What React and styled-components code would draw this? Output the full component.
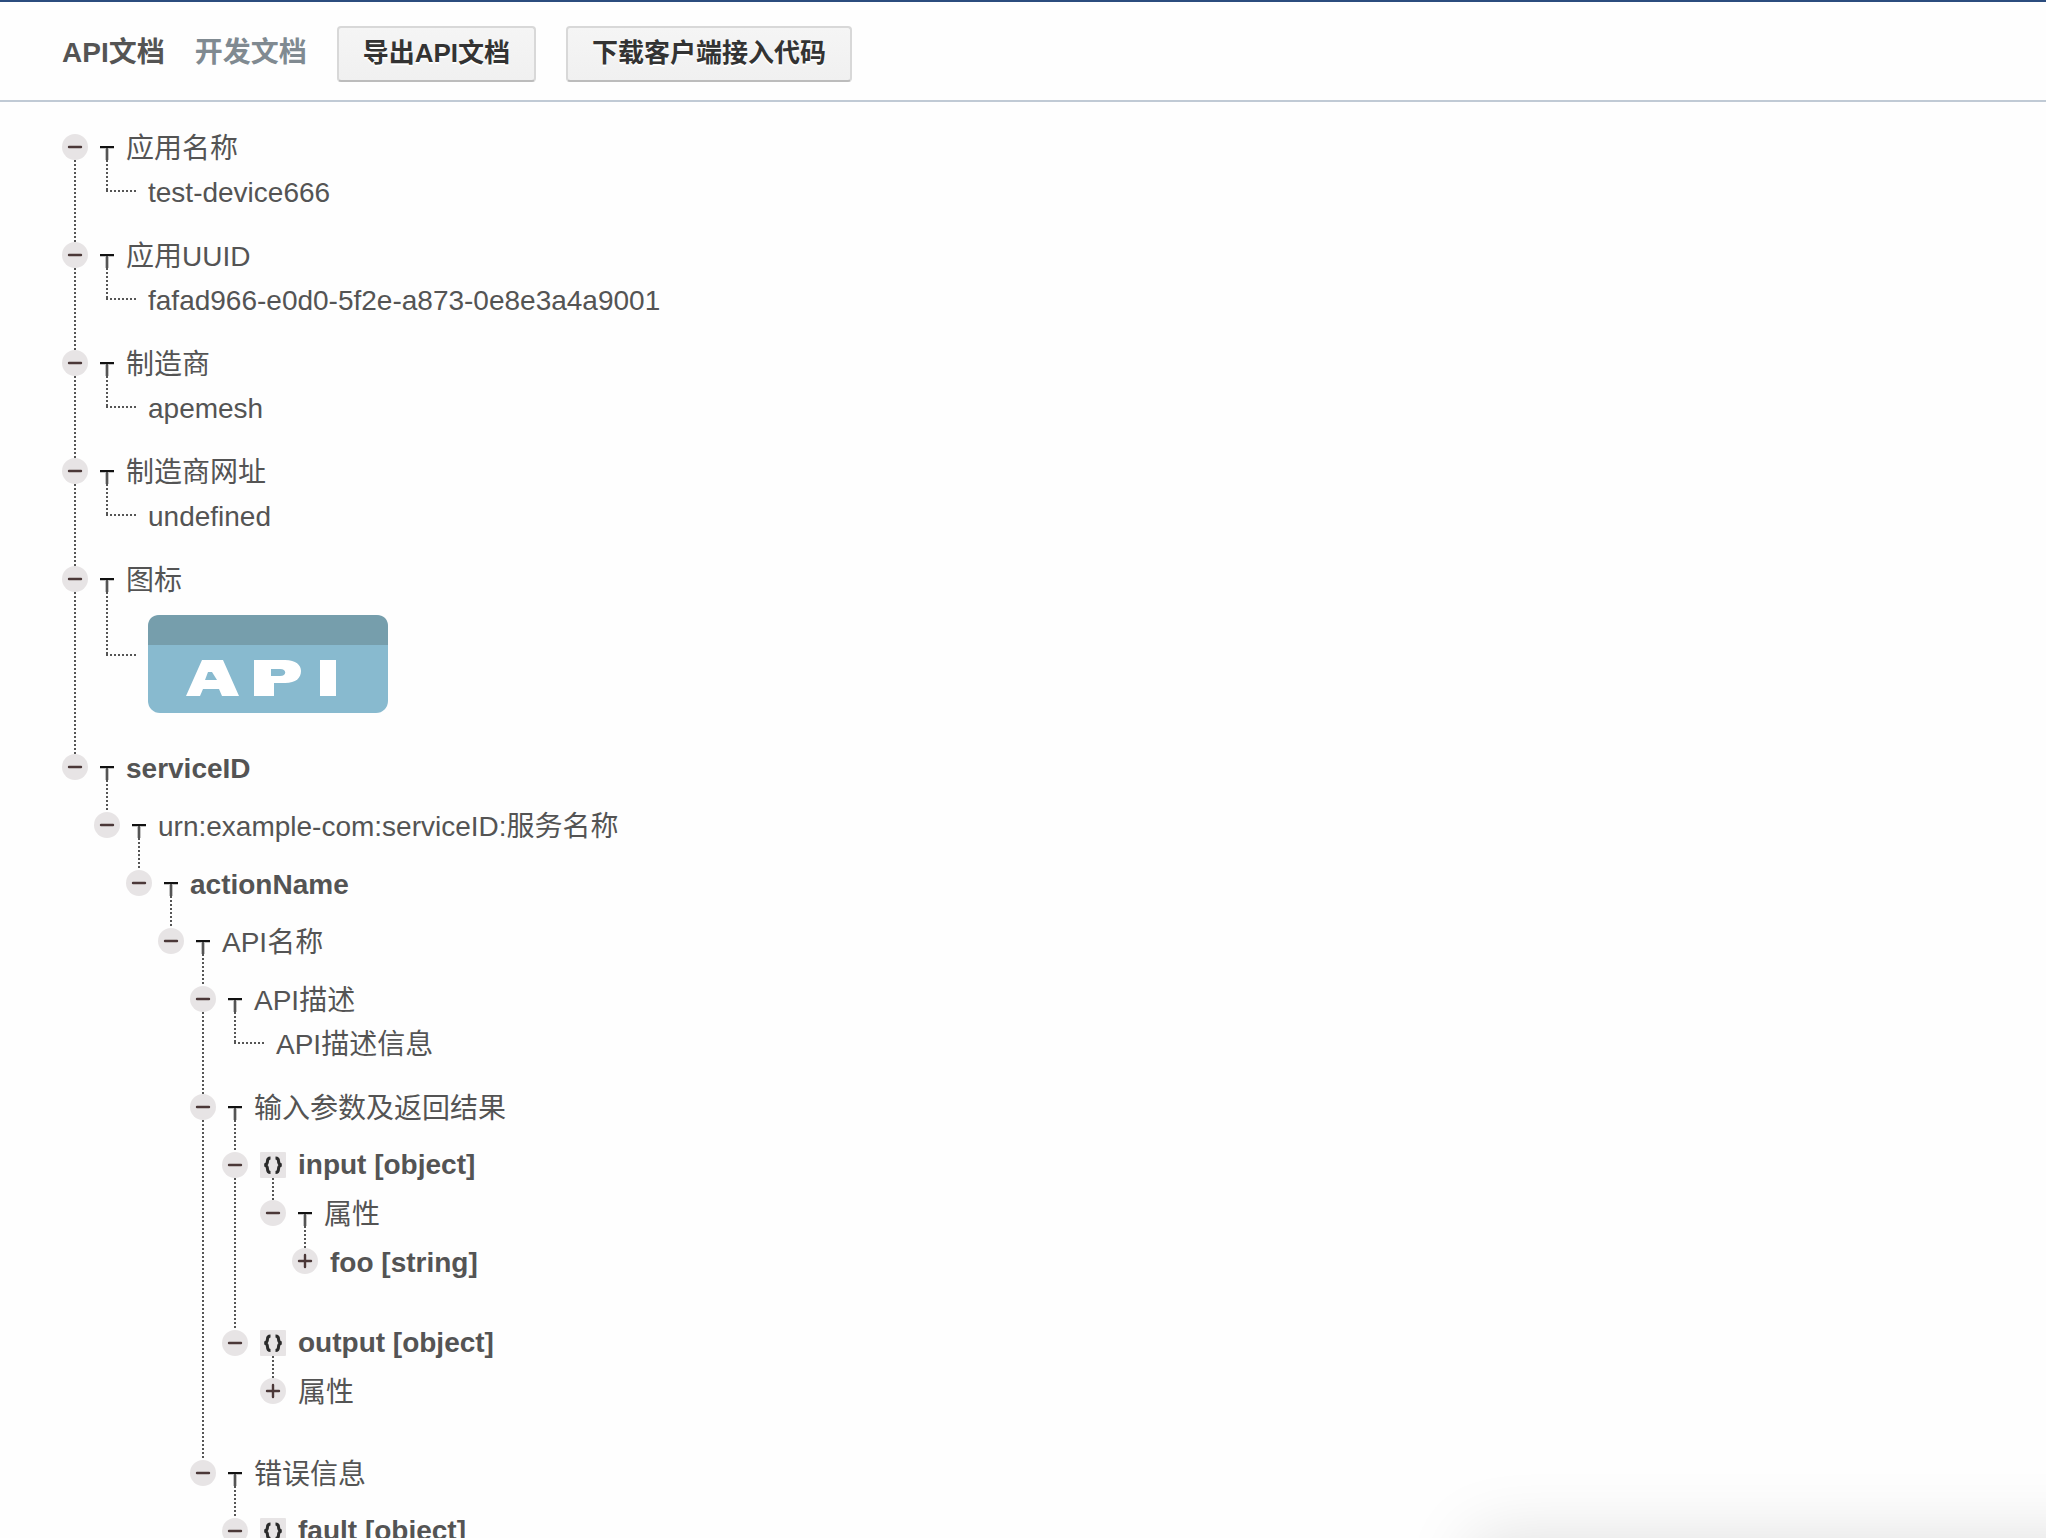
import React, { useState } from 'react'
import styled, { createGlobalStyle, css } from 'styled-components'

const Colors = {
  Text: '#545454',
  Muted: '#808a91',
  Navy: '#2b4c7e',
  Line: '#c0cad5',
  Dot: '#555555',
  Toggle: '#e7e4e5',
}

const dotsY = `repeating-linear-gradient(to bottom, ${Colors.Dot} 0 2px, transparent 2px 4px)`

const properties = (items) => ({ label: '属性', open: true, stem: 22, children: items })

const tree = [
  { label: '应用名称', value: 'test-device666' },
  { label: '应用UUID', value: 'fafad966-e0d0-5f2e-a873-0e8e3a4a9001' },
  { label: '制造商', value: 'apemesh' },
  { label: '制造商网址', value: 'undefined' },
  { label: '图标', logo: true },
  {
    label: 'serviceID',
    bold: true,
    children: [
      {
        label: 'urn:example-com:serviceID:服务名称',
        children: [
          {
            label: 'actionName',
            bold: true,
            children: [
              {
                label: 'API名称',
                children: [
                  { label: 'API描述', value: 'API描述信息' },
                  {
                    label: '输入参数及返回结果',
                    children: [
                      {
                        label: 'input [object]',
                        kind: 'object',
                        bold: true,
                        stem: 22,
                        children: [
                          properties([
                            { label: 'foo [string]', kind: 'none', bold: true, closed: true },
                          ]),
                        ],
                      },
                      {
                        label: 'output [object]',
                        kind: 'object',
                        bold: true,
                        stem: 22,
                        children: [{ label: '属性', kind: 'none', closed: true }],
                      },
                    ],
                  },
                  {
                    label: '错误信息',
                    children: [{ label: 'fault [object]', kind: 'object', bold: true }],
                  },
                ],
              },
            ],
          },
        ],
      },
    ],
  },
]

function TextIcon() {
  return (
    <Icon viewBox="0 0 26 26" aria-hidden="true">
      <path d="M6 13h14" stroke="#111" strokeWidth="2" />
      <path d="M6 14.5h14" stroke="#c4c4c4" strokeWidth="1" />
      <path d="M13 14v12" stroke="#c4c4c4" strokeWidth="4" />
      <path d="M13 14v12" stroke="#555" strokeWidth="2" />
    </Icon>
  )
}

function ObjectIcon() {
  return (
    <Icon viewBox="0 0 26 26" aria-hidden="true">
      <rect width="26" height="26" rx="1" fill={Colors.Toggle} />
      <g fill="none" stroke="#2a2a2a" strokeWidth="3">
        <path d="M10.5 6C8 6 7.5 7 7.5 9C7.5 11 7 12.500 4.500 13C7 13.500 7.500 15 7.500 17C7.500 19 8 20.500 10.500 20.500" />
        <path d="M15.500 6C18 6 18.500 7 18.500 9C18.500 11 19 12.500 21.500 13C19 13.500 18.500 15 18.500 17C18.500 19 18 20.500 15.500 20.500" />
      </g>
    </Icon>
  )
}

function ToggleIcon({ closed }) {
  return (
    <Icon viewBox="0 0 26 26" aria-hidden="true">
      <circle cx="13" cy="13" r="13" fill={Colors.Toggle} />
      <g stroke="#4b3838" strokeWidth="2.4" strokeLinecap="round">
        <path d="M7 13h12" />
        {closed && <path d="M13 7v12" />}
      </g>
    </Icon>
  )
}

function ApiLogo() {
  return (
    <Logo viewBox="0 0 240 98" role="img" aria-label="API">
      <rect width="240" height="98" rx="12" fill="#88bacf" />
      <path d="M0 30V12Q0 0 12 0H228Q240 0 240 12V30Z" fill="#769eac" />
      <g fill="#fff" fillRule="evenodd">
        <path d="M38 81L54 45H75L91 81H74L71 74H55L52 81ZM57 65H69L64 57H60Z" />
        <path d="M106 45H137C148 45 153 50 153 56C153 63 148 68 137 68H126V81H106ZM123 54V61H132C139 61 139 54 132 54Z" />
        <path d="M172 45H188V81H172Z" />
      </g>
    </Logo>
  )
}

function TreeNode({ node, last }) {
  const [closed, setClosed] = useState(Boolean(node.closed))
  const gap = node.kind ? 12 : 6

  return (
    <Node $gap={gap}>
      <Rail>
        <Toggle
          type="button"
          aria-expanded={!closed}
          aria-label={node.label}
          onClick={() => setClosed(!closed)}
        >
          <ToggleIcon closed={closed} />
        </Toggle>
        {!last && <RailLine />}
      </Rail>
      <NodeBody $padded={closed}>
        <NodeHead $gap={gap}>
          {node.kind === 'object' && <ObjectIcon />}
          {!node.kind && <TextIcon />}
          <Label $bold={node.bold} $object={node.kind === 'object'}>{node.label}</Label>
        </NodeHead>
        {!closed && node.value && (
          <Leaf>
            <Elbow $height={32} />
            <Value>{node.value}</Value>
          </Leaf>
        )}
        {!closed && node.logo && (
          <Leaf>
            <Elbow $height={64} />
            <ApiLogo />
          </Leaf>
        )}
        {!closed && node.children && (
          <>
            <Stem $height={node.stem || 32} />
            <NodeList nodes={node.children} />
          </>
        )}
      </NodeBody>
    </Node>
  )
}

function NodeList({ nodes }) {
  return (
    <List>
      {nodes.map((node, i) => (
        <TreeNode key={node.label} node={node} last={i === nodes.length - 1} />
      ))}
    </List>
  )
}

export default function App() {
  return (
    <Page>
      <GlobalStyle />
      <TopBar>
        <Tabs>
          <TabLink href="#api" $active>API文档</TabLink>
          <TabLink href="#dev">开发文档</TabLink>
        </Tabs>
        <Button type="button">导出API文档</Button>
        <Button type="button">下载客户端接入代码</Button>
      </TopBar>
      <Main>
        <NodeList nodes={tree} />
      </Main>
      <CornerShadow />
    </Page>
  )
}

const GlobalStyle = createGlobalStyle`
  * {
    box-sizing: border-box;
  }

  body {
    margin: 0;
    background-color: #fefefe;
    color: ${Colors.Text};
    font-family: 'Liberation Sans', 'Noto Sans CJK SC', sans-serif;
    font-size: 28px;
  }
`

const Page = styled.div`
  height: 100vh;
  overflow: hidden;
  border-top: 2px solid ${Colors.Navy};
`

const TopBar = styled.header`
  display: flex;
  align-items: center;
  gap: 30px;
  height: 100px;
  padding: 6px 62px 0;
  border-bottom: 2px solid ${Colors.Line};
`

const Tabs = styled.nav`
  display: flex;
  gap: 30px;
  padding-bottom: 2px;
`

const TabLink = styled.a`
  color: ${(props) => (props.$active ? Colors.Text : Colors.Muted)};
  font-weight: 700;
  line-height: 40px;
  text-decoration: none;
  white-space: nowrap;
`

const Button = styled.button`
  height: 56px;
  padding: 0 24px 2px;
  border: 2px solid #d8d8d8;
  border-bottom-color: #bcbcbc;
  border-radius: 4px;
  background: linear-gradient(#f5f5f5, #f0f0f0);
  color: #333;
  font-family: inherit;
  font-size: 26px;
  font-weight: 700;
  line-height: 40px;
  text-shadow: 0 2px 0 #fff;
  white-space: nowrap;
  cursor: pointer;
`

const Main = styled.main`
  padding: 32px 62px;
`

const List = styled.ul`
  margin: 0;
  padding: 0;
  list-style: none;
`

const Node = styled.li`
  display: flex;
  gap: ${(props) => props.$gap}px;
`

const Rail = styled.div`
  display: flex;
  flex: none;
  flex-direction: column;
  align-items: center;
  width: 26px;
`

const RailLine = styled.div`
  flex: 1;
  width: 2px;
  background: ${dotsY};
`

const Toggle = styled.button`
  display: block;
  width: 26px;
  height: 26px;
  padding: 0;
  border: 0;
  background: none;
  cursor: pointer;
`

const Icon = styled.svg`
  display: block;
  flex: none;
  width: 26px;
  height: 26px;
`

const NodeBody = styled.div`
  min-width: 0;
  ${(props) =>
    props.$padded &&
    css`
      padding-bottom: 56px;
    `}
`

const NodeHead = styled.div`
  display: flex;
  gap: ${(props) => props.$gap}px;
  height: 26px;
`

const Label = styled.span`
  font-weight: ${(props) => (props.$bold ? 700 : 400)};
  line-height: ${(props) => (props.$object ? 26 : 30)}px;
  white-space: nowrap;
`

const Stem = styled.div`
  width: 2px;
  height: ${(props) => props.$height}px;
  margin-left: 12px;
  background: ${dotsY};
`

const Leaf = styled.div`
  display: flex;
  align-items: flex-start;
  gap: 12px;
  padding-left: 12px;
`

const Elbow = styled.div`
  width: 30px;
  height: ${(props) => props.$height}px;
  background:
    ${dotsY} left top / 2px 100% no-repeat,
    repeating-linear-gradient(to right, ${Colors.Dot} 0 2px, transparent 2px 4px) left bottom / 100% 2px no-repeat;
`

const Value = styled.span`
  margin: 16px 0 32px;
  line-height: 34px;
  white-space: nowrap;
`

const Logo = styled.svg`
  display: block;
  width: 240px;
  height: 98px;
  margin: 23px 0 41px;
`

const CornerShadow = styled.div`
  position: fixed;
  right: -100px;
  bottom: -100px;
  width: calc(28% + 100px);
  height: 100px;
  box-shadow: 0 0 70px rgba(0, 0, 0, 0.13);
  pointer-events: none;
`
